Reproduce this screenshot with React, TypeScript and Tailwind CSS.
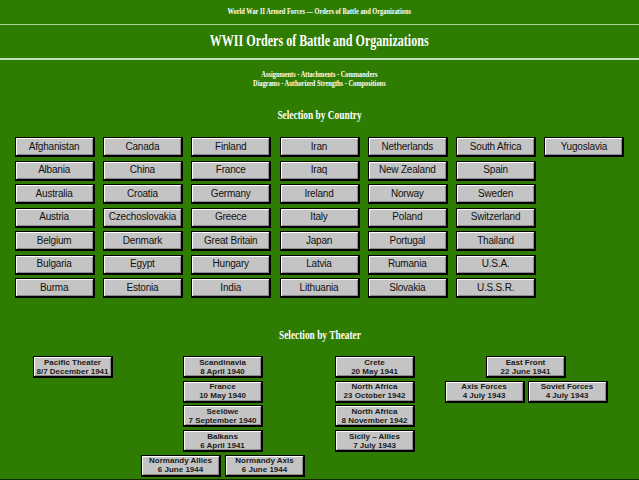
const countries: string[][] = [
  ['Afghanistan', 'Albania', 'Australia', 'Austria', 'Belgium', 'Bulgaria', 'Burma'],
  ['Canada', 'China', 'Croatia', 'Czechoslovakia', 'Denmark', 'Egypt', 'Estonia'],
  ['Finland', 'France', 'Germany', 'Greece', 'Great Britain', 'Hungary', 'India'],
  ['Iran', 'Iraq', 'Ireland', 'Italy', 'Japan', 'Latvia', 'Lithuania'],
  ['Netherlands', 'New Zealand', 'Norway', 'Poland', 'Portugal', 'Rumania', 'Slovakia'],
  ['South Africa', 'Spain', 'Sweden', 'Switzerland', 'Thailand', 'U.S.A.', 'U.S.S.R.'],
  ['Yugoslavia'],
]

type Theater = { name: string, date: string }

function CountryButton({ label }: { label: string }) {
  return (
    <button
      type="button"
      className="h-[20px] w-[80px] whitespace-nowrap border border-black border-r-2 border-b-2 bg-[#c4c4c4] text-[10px] leading-none text-[#111] shadow-[inset_1px_1px_0_#fff,inset_-1px_-1px_0_#8a8a8a] font-['Liberation_Sans',Arial,sans-serif] tracking-[-0.2px]"
    >
      {label}
    </button>
  )
}

function TheaterButton({ t }: { t: Theater }) {
  return (
    <button
      type="button"
      className="flex h-[22px] w-[80px] shrink-0 flex-col items-center justify-center border border-black border-r-2 border-b-2 bg-[#c4c4c4] text-[8px] font-bold leading-[9px] text-[#1a1a1a] shadow-[inset_1px_1px_0_#fff,inset_-1px_-1px_0_#8a8a8a] font-['Liberation_Sans',Arial,sans-serif]"
    >
      <span className="whitespace-nowrap">{t.name}</span>
      <span className="whitespace-nowrap">{t.date}</span>
    </button>
  )
}

function Stack({ items }: { items: Theater[] }) {
  return (
    <div className="flex flex-col items-center gap-[2.7px]">
      {items.map(t => <TheaterButton key={t.name + t.date} t={t} />)}
    </div>
  )
}

function Pair({ items }: { items: Theater[] }) {
  return (
    <div className="flex justify-center gap-[4px]">
      {items.map(t => <TheaterButton key={t.name} t={t} />)}
    </div>
  )
}

export default function App() {
  return (
    <div className="h-[480px] w-[639px] overflow-hidden border-b border-[#0f2a00] bg-[#2e7d02] text-white font-['Liberation_Serif','Times_New_Roman',serif]">
      <div className="pt-[6px] text-center text-[9px] font-bold leading-[10px]">
        <span className="inline-block scale-x-[0.71]">World War II Armed Forces — Orders of Battle and Organizations</span>
      </div>
      <div className="mt-[8px] h-px bg-[#a9d29b]" />
      <div className="pt-[6px] text-center text-[17px] font-bold leading-[20px]">
        <span className="inline-block scale-x-[0.71]">WWII Orders of Battle and Organizations</span>
      </div>
      <div className="mt-[7px] h-[2px] bg-[#c3e0b8]" />

      <div className="pt-[10px] text-center text-[8.5px] font-bold leading-[8.5px]">
        <div><span className="inline-block scale-x-[0.75]">Assignments - Attachments - Commanders</span></div>
        <div><span className="inline-block scale-x-[0.75]">Diagrams - Authorized Strengths - Compositions</span></div>
      </div>

      <div className="pt-[20px] text-center text-[13px] font-bold leading-[16px]">
        <span className="inline-block scale-x-[0.72]">Selection by Country</span>
      </div>

      <div className="mt-[14px] flex justify-center gap-[8.3px]">
        {countries.map((col, i) => (
          <div key={i} className="flex w-[80px] flex-col gap-[3.5px]">
            {col.map(c => <CountryButton key={c} label={c} />)}
          </div>
        ))}
      </div>

      <div className="pt-[29px] text-center text-[13px] font-bold leading-[16px]">
        <span className="inline-block scale-x-[0.72]">Selection by Theater</span>
      </div>

      <div className="mt-[13px] flex">
        <div className="flex w-[146px] justify-center">
          <Stack items={[{ name: 'Pacific Theater', date: '8/7 December 1941' }]} />
        </div>
        <div className="flex w-[154px] flex-col items-center gap-[2.7px]">
          <Stack
            items={[
              { name: 'Scandinavia', date: '8 April 1940' },
              { name: 'France', date: '10 May 1940' },
              { name: 'Seelöwe', date: '7 September 1940' },
              { name: 'Balkans', date: '6 April 1941' },
            ]}
          />
          <Pair
            items={[
              { name: 'Normandy Allies', date: '6 June 1944' },
              { name: 'Normandy Axis', date: '6 June 1944' },
            ]}
          />
        </div>
        <div className="flex w-[150px] justify-center">
          <Stack
            items={[
              { name: 'Crete', date: '20 May 1941' },
              { name: 'North Africa', date: '23 October 1942' },
              { name: 'North Africa', date: '8 November 1942' },
              { name: 'Sicily – Allies', date: '7 July 1943' },
            ]}
          />
        </div>
        <div className="flex w-[152px] flex-col items-center gap-[2.7px]">
          <TheaterButton t={{ name: 'East Front', date: '22 June 1941' }} />
          <div className="flex justify-center gap-[3px]">
            <TheaterButton t={{ name: 'Axis Forces', date: '4 July 1943' }} />
            <TheaterButton t={{ name: 'Soviet Forces', date: '4 July 1943' }} />
          </div>
        </div>
      </div>
    </div>
  )
}
